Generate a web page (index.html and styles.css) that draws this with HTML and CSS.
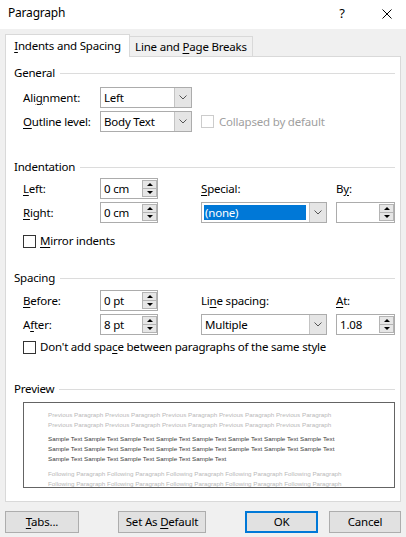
FILE: index.html
```html
<!DOCTYPE html>
<html lang="en">
<head>
<meta charset="utf-8">
<title>Paragraph</title>
<link rel="stylesheet" href="styles.css">
</head>
<body>
<div class="dialog">
  <header class="titlebar">
    <span class="title">Paragraph</span>
    <span class="help">?</span>
    <span class="close"><svg width="10" height="10" viewBox="0 0 10 10"><path d="M0.5 0.5L9.5 9.5M9.5 0.5L0.5 9.5" stroke="#000" stroke-width="1" fill="none"/></svg></span>
  </header>
  <nav class="tabs">
    <div class="tab active"><span><u>I</u>ndents and Spacing</span></div>
    <div class="tab"><span>Line and <u>P</u>age Breaks</span></div>
  </nav>
  <main class="page">
    <div class="legend"><span>General</span></div>
    <div class="grid g-general">
      <span class="lbl">Ali<u>g</u>nment:</span>
      <div class="combo w92"><span class="val">Left</span><span class="arrow"><svg width="8" height="5" viewBox="0 0 8 5"><path d="M0.5 0.5L4 4L7.5 0.5" stroke="#555" fill="none"/></svg></span></div>
      <span></span><span></span>
      <span class="lbl"><u>O</u>utline level:</span>
      <div class="combo w92"><span class="val">Body Text</span><span class="arrow"><svg width="8" height="5" viewBox="0 0 8 5"><path d="M0.5 0.5L4 4L7.5 0.5" stroke="#555" fill="none"/></svg></span></div>
      <div class="check disabled span2"><span class="box"></span><span>Collapsed by default</span></div>
    </div>

    <div class="legend sec"><span>Indentation</span></div>
    <div class="grid g-ind">
      <span class="lbl"><u>L</u>eft:</span>
      <div class="spin"><span class="val">0 cm</span><span class="btns"><span class="up"></span><span class="dn"></span></span></div>
      <span class="lbl"><u>S</u>pecial:</span>
      <span class="lbl">B<u>y</u>:</span>
      <span class="lbl"><u>R</u>ight:</span>
      <div class="spin"><span class="val">0 cm</span><span class="btns"><span class="up"></span><span class="dn"></span></span></div>
      <div class="combo w126"><span class="val"><span class="sel">(none)</span></span><span class="arrow"><svg width="8" height="5" viewBox="0 0 8 5"><path d="M0.5 0.5L4 4L7.5 0.5" stroke="#555" fill="none"/></svg></span></div>
      <div class="spin w59"><span class="val"></span><span class="btns"><span class="up"></span><span class="dn"></span></span></div>
    </div>
    <div class="check row-mirror"><span class="box"></span><span><u>M</u>irror indents</span></div>

    <div class="legend sec2"><span>Spacing</span></div>
    <div class="grid g-spc">
      <span class="lbl"><u>B</u>efore:</span>
      <div class="spin"><span class="val">0 pt</span><span class="btns"><span class="up"></span><span class="dn"></span></span></div>
      <span class="lbl">Li<u>n</u>e spacing:</span>
      <span class="lbl"><u>A</u>t:</span>
      <span class="lbl">A<u>f</u>ter:</span>
      <div class="spin"><span class="val">8 pt</span><span class="btns"><span class="up"></span><span class="dn"></span></span></div>
      <div class="combo w126"><span class="val">Multiple</span><span class="arrow"><svg width="8" height="5" viewBox="0 0 8 5"><path d="M0.5 0.5L4 4L7.5 0.5" stroke="#555" fill="none"/></svg></span></div>
      <div class="spin w59"><span class="val">1.08</span><span class="btns"><span class="up"></span><span class="dn"></span></span></div>
    </div>
    <div class="check row-dont"><span class="box"></span><span>Don't add spa<u>c</u>e between paragraphs of the same style</span></div>

    <div class="legend sec3"><span>Preview</span></div>
    <div class="preview">
      <div class="para prev">
        <div>Previous Paragraph Previous Paragraph Previous Paragraph Previous Paragraph Previous Paragraph</div>
        <div>Previous Paragraph Previous Paragraph Previous Paragraph Previous Paragraph Previous Paragraph</div>
      </div>
      <div class="para sample">
        <div>Sample Text Sample Text Sample Text Sample Text Sample Text Sample Text Sample Text Sample Text</div>
        <div>Sample Text Sample Text Sample Text Sample Text Sample Text Sample Text Sample Text Sample Text</div>
        <div>Sample Text Sample Text Sample Text Sample Text Sample Text</div>
      </div>
      <div class="para follow">
        <div>Following Paragraph Following Paragraph Following Paragraph Following Paragraph Following Paragraph</div>
        <div>Following Paragraph Following Paragraph Following Paragraph Following Paragraph Following Paragraph</div>
      </div>
    </div>
  </main>
  <footer class="btnbar">
    <button class="btn b-tabs"><u>T</u>abs...</button>
    <button class="btn b-default">Set As <u>D</u>efault</button>
    <button class="btn b-ok">OK</button>
    <button class="btn b-cancel">Cancel</button>
  </footer>
</div>
</body>
</html>
```

FILE: styles.css
```css
* { box-sizing: border-box; }
html, body { margin: 0; padding: 0; }
body {
  width: 406px;
  height: 537px;
  overflow: hidden;
  background: #f0f0f0;
  font-family: "Noto Sans", "Liberation Sans", sans-serif;
  font-size: 11.5px;
  letter-spacing: -0.2px;
  line-height: 16px;
  color: #000;
}
u { text-decoration: underline; text-underline-offset: 2px; text-decoration-thickness: 1px; }

.titlebar {
  height: 29px;
  background: #fff;
  display: flex;
  align-items: flex-start;
  padding: 5px 0 0 8px;
}
.title { flex: 1; font-size: 12px; }
.help { width: 14px; text-align: center; font-size: 13px; }
.close { width: 10px; height: 10px; margin: 4px 14px 0 33px; display: flex; }

.tabs {
  display: flex;
  align-items: flex-end;
  height: 28px;
  padding-left: 5px;
}
.tab {
  display: flex;
  align-items: center;
  justify-content: center;
  white-space: nowrap;
  border: 1px solid #d9d9d9;
  border-bottom: 0;
}
.tab.active {
  width: 125px;
  height: 23px;
  background: #fff;
  padding-bottom: 1px;
}
.tab:not(.active) {
  width: 123px;
  height: 20px;
  margin-bottom: 1px;
  border-left: 0;
  background: #f0f0f0;
}

.page {
  margin: -1px 5px 0 5px;
  width: 396px;
  height: 446px;
  background: #fff;
  border: 1px solid #d9d9d9;
}

.legend {
  display: flex;
  align-items: center;
  height: 16px;
  margin-top: 8px;
  padding: 0 5px 0 8px;
}
.legend::after {
  content: "";
  flex: 1;
  height: 1px;
  background: #dcdcdc;
  margin-left: 5px;
}
.legend.sec { margin-top: 27px; }
.legend.sec2 { margin-top: 22px; }
.legend.sec3 { margin-top: 27px; }

.grid {
  display: grid;
  grid-template-columns: 77px 101px 135px 59px;
  grid-auto-rows: 21px;
  row-gap: 3px;
  align-items: center;
  padding-left: 17px;
}
.g-general { margin-top: 6px; }
.g-ind { margin-top: 3px; }
.g-spc { margin-top: 4px; }
.span2 { grid-column: span 2; }
.lbl { white-space: nowrap; }

.combo {
  height: 21px;
  display: flex;
  border: 1px solid #acacac;
  background: #fff;
}
.combo .val {
  flex: 1;
  display: flex;
  align-items: center;
  padding-left: 3px;
  white-space: nowrap;
}
.combo .arrow {
  width: 17px;
  background: #e5e5e5;
  border-left: 1px solid #c4c4c4;
  display: flex;
  align-items: center;
  justify-content: center;
}
.w92 { width: 92px; }
.w126 { width: 126px; }
.sel {
  display: block;
  flex: 1;
  height: 15px;
  line-height: 15px;
  margin-right: 3px;
  margin-left: -1px;
  padding-left: 1px;
  background: #0078d7;
  color: #fff;
}

.spin {
  width: 58px;
  height: 21px;
  display: flex;
  border: 1px solid #acacac;
  background: #fff;
}
.spin.w59 { width: 59px; }
.spin .val {
  flex: 1;
  display: flex;
  align-items: center;
  padding-left: 3px;
}
.spin .btns {
  width: 15px;
  margin: 1px 0 1px 0;
  display: flex;
  flex-direction: column;
  border: 1px solid #b4b4b4;
  background: #e6e6e6;
}
.spin .up, .spin .dn {
  flex: 1;
  display: flex;
  align-items: center;
  justify-content: center;
}
.spin .up { border-bottom: 1px solid #b4b4b4; }
.spin .up::before {
  content: "";
  border-left: 3px solid transparent;
  border-right: 3px solid transparent;
  border-bottom: 3px solid #000;
}
.spin .dn::before {
  content: "";
  border-left: 3px solid transparent;
  border-right: 3px solid transparent;
  border-top: 3px solid #000;
}

.check {
  display: flex;
  align-items: center;
  height: 14px;
  white-space: nowrap;
}
.check .box {
  width: 13px;
  height: 13px;
  border: 1px solid #333;
  background: #fff;
  margin-right: 4px;
  flex: none;
}
.check.disabled { color: #a0a0a0; }
.check.disabled .box { border-color: #cccccc; margin-right: 5px; }
.row-mirror { margin: 11px 0 0 17px; }
.row-dont { margin: 5px 0 0 17px; }

.preview {
  margin: 5px 0 0 17px;
  width: 372px;
  height: 86px;
  border: 1px solid #646464;
  background: #fff;
  overflow: hidden;
  padding: 7px 0 0 24px;
  font-family: "Liberation Sans", sans-serif;
  font-size: 6.25px;
  letter-spacing: 0;
  line-height: 10px;
  white-space: nowrap;
}
.para.prev, .para.follow { color: #b9b9b9; }
.para.sample { color: #404040; margin-top: 4px; }
.para.follow { margin-top: 5px; }

.btnbar {
  display: flex;
  padding: 9px 0 0 5px;
}
.btn {
  height: 22px;
  padding: 0;
  font: inherit;
  letter-spacing: inherit;
  color: #000;
  background: #e1e1e1;
  border: 1px solid #adadad;
  border-radius: 0;
  white-space: nowrap;
}
.b-tabs { width: 74px; }
.b-default { width: 88px; margin-left: 39px; }
.b-ok { width: 73px; margin-left: 39px; border: 2px solid #0078d7; }
.b-cancel { width: 72px; margin-left: 11px; }
```
